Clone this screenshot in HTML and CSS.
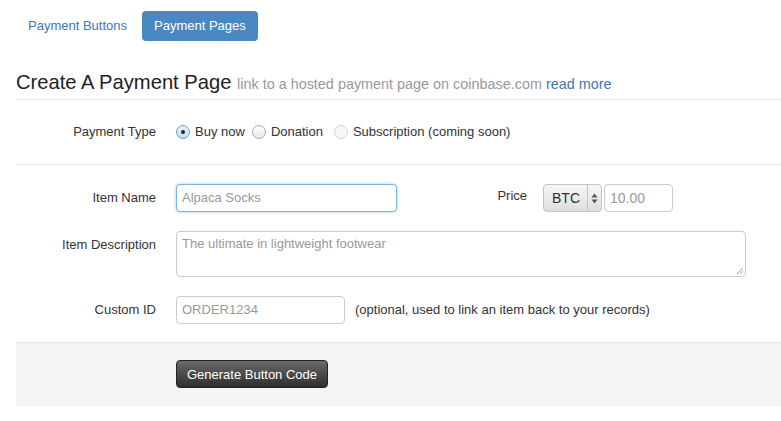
FILE: index.html
```html
<!DOCTYPE html>
<html>
<head>
<meta charset="utf-8">
<link rel="stylesheet" href="styles.css">
</head>
<body>
<nav class="tabs">
  <a class="tab">Payment Buttons</a>
  <a class="tab active">Payment Pages</a>
</nav>
<h1 class="title">Create A Payment Page <small>link to a hosted payment page on coinbase.com <a class="more">read more</a></small></h1>
<form class="form">
  <div class="row type-row">
    <label class="lbl">Payment Type</label>
    <div class="radios">
      <span class="radio"><span class="dot on"></span>Buy now</span>
      <span class="radio"><span class="dot"></span>Donation</span>
      <span class="radio dim"><span class="dot off"></span>Subscription (coming soon)</span>
    </div>
  </div>
  <div class="fields">
    <div class="row">
      <label class="lbl">Item Name</label>
      <div class="input name focus">Alpaca Socks</div>
      <label class="lbl price-lbl">Price</label>
      <div class="select">BTC<span class="arrows"><svg width="7" height="11" viewBox="0 0 7 11"><path d="M3.5 0.5L6.5 4.5H0.5Z" fill="#555"/><path d="M3.5 10.5L6.5 6.5H0.5Z" fill="#555"/></svg></span></div>
      <div class="input amount">10.00</div>
    </div>
    <div class="row desc-row">
      <label class="lbl">Item Description</label>
      <div class="input textarea">The ultimate in lightweight footwear<svg class="grip" width="7" height="7" viewBox="0 0 7 7"><path d="M1 7L7 1M4 7L7 4" stroke="#888" stroke-width="0.8"/></svg></div>
    </div>
    <div class="row">
      <label class="lbl">Custom ID</label>
      <div class="input cid">ORDER1234</div>
      <span class="help">(optional, used to link an item back to your records)</span>
    </div>
  </div>
  <div class="actions">
    <button type="button" class="btn">Generate Button Code</button>
  </div>
</form>
</body>
</html>
```
FILE: styles.css
```css
* { box-sizing: border-box; }
body {
  margin: 0;
  padding: 11px 0 0 16px;
  font-family: "Helvetica Neue", "Liberation Sans", Arial, sans-serif;
  font-size: 13px;
  color: #333;
  background: #fff;
}
.tabs { display: flex; gap: 3px; }
.tab {
  display: block;
  height: 30px;
  line-height: 30px;
  padding: 0 12px;
  border-radius: 4px;
  color: #3f76b3;
  font-size: 13px;
}
.active { background: #4a88c2; color: #fff; padding: 0 12px; }
.title {
  margin: 24px 0 0 0;
  font-size: 20.2px;
  font-weight: normal;
  color: #222;
  height: 35px;
  line-height: 34px;
  border-bottom: 1px solid #e3e3e3;
}
.title small { font-size: 14.4px; color: #999; }
.more { color: #3f76b3; }
.row { display: flex; align-items: flex-start; }
.lbl {
  width: 160px;
  text-align: right;
  padding-right: 20px;
  flex: none;
  line-height: 18px;
}
.type-row { height: 65px; padding-top: 23px; border-bottom: 1px solid #e8e8e8; }
.radios { display: flex; gap: 7px; line-height: 18px; }
.radio { display: flex; align-items: center; gap: 5px; }
.radio.dim { margin-left: 4px; }
.dot {
  width: 14px; height: 14px; border-radius: 50%;
  border: 1px solid #a8a8a8;
  background: linear-gradient(#fff, #e8e8e8);
  position: relative;
}
.dot.on { border-color: #6f9fd4; background: linear-gradient(#eaf2fb, #c5dbf3); }
.dot.on::after {
  content: ""; position: absolute; left: 4px; top: 4px;
  width: 4px; height: 4px; border-radius: 50%; background: #222;
}
.dot.off { border-color: #d4d4d4; background: #f7f7f7; }
.fields { padding-top: 19px; }
.fields .row { margin-bottom: 19px; }
.fields .row .lbl { padding-top: 5px; }
.input {
  height: 28px;
  border: 1px solid #ccc;
  border-radius: 4px;
  padding: 4px 5px;
  color: #999;
  line-height: 18px;
  background: #fff;
}
.focus { border-color: #7fb0e4; box-shadow: 0 0 3px rgba(82,168,236,.6); }
.name { width: 221px; }
.price-lbl { width: 146px; padding-right: 16px; padding-top: 3px !important; }
.select {
  height: 28px;
  width: 59px;
  border: 1px solid #c4c4c4;
  border-radius: 4px;
  background: linear-gradient(#f6f6f6, #dedede);
  display: flex;
  align-items: center;
  padding-left: 8px;
  color: #333;
  font-size: 14px;
  margin-right: 2px;
}
.arrows {
  margin-left: auto;
  width: 14px;
  height: 100%;
  border-left: 1px solid #c4c4c4;
  display: flex;
  align-items: center;
  justify-content: center;
}
.amount { width: 69px; font-size: 14px; padding-left: 5px; }
.desc-row { margin-bottom: 19px; }
.textarea { width: 570px; height: 46px; position: relative; padding-top: 3px; }
.grip { position: absolute; right: 2px; bottom: 2px; }
.cid { width: 169px; }
.help { margin-left: 10px; padding-top: 5px; line-height: 18px; }
.actions {
  margin-top: -1px;
  background: #f5f5f5;
  border-top: 1px solid #e5e5e5;
  height: 64px;
  padding: 17px 0 0 160px;
}
.btn {
  height: 28px;
  width: 152px;
  border: 1px solid #222;
  border-radius: 4px;
  background: linear-gradient(#6a6a6a, #2e2e2e);
  color: #fff;
  font-family: inherit;
  font-size: 13px;
  padding: 0;
}
```
